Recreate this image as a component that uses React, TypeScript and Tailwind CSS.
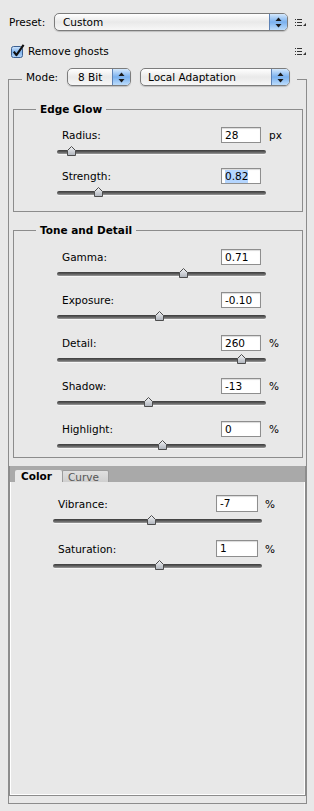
import type { ReactNode } from "react";

type Item = { label: string; value: string; unit?: string; pos: number; selected?: boolean };

const edgeGlow: Item[] = [
  { label: "Radius:", value: "28", unit: "px", pos: 14 },
  { label: "Strength:", value: "0.82", pos: 41, selected: true },
];

const toneDetail: Item[] = [
  { label: "Gamma:", value: "0.71", pos: 126 },
  { label: "Exposure:", value: "-0.10", pos: 102 },
  { label: "Detail:", value: "260", unit: "%", pos: 184 },
  { label: "Shadow:", value: "-13", unit: "%", pos: 91 },
  { label: "Highlight:", value: "0", unit: "%", pos: 105 },
];

const color: Item[] = [
  { label: "Vibrance:", value: "-7", unit: "%", pos: 98 },
  { label: "Saturation:", value: "1", unit: "%", pos: 106 },
];

function MenuIcon({ className }: { className?: string }) {
  return (
    <svg width="11" height="7" viewBox="0 0 11 7" className={className}>
      <rect x="0" y="0" width="1" height="1" fill="#333" />
      <rect x="2" y="0" width="5" height="1" fill="#333" />
      <rect x="0" y="3" width="1" height="1" fill="#333" />
      <rect x="2" y="3" width="5" height="1" fill="#333" />
      <rect x="0" y="6" width="1" height="1" fill="#333" />
      <rect x="2" y="6" width="5" height="1" fill="#333" />
      <polygon points="8,7 11,7 11,4" fill="#333" />
    </svg>
  );
}

function Checkbox() {
  return (
    <svg width="14" height="15" viewBox="0 0 14 15">
      <defs>
        <linearGradient id="cb" x1="0" y1="0" x2="0" y2="1">
          <stop offset="0" stopColor="#d2e6fb" />
          <stop offset="0.5" stopColor="#7fb3ee" />
          <stop offset="1" stopColor="#b5d7fa" />
        </linearGradient>
      </defs>
      <rect x="0.5" y="2.5" width="11" height="11" rx="2" fill="url(#cb)" stroke="#3b5f91" />
      <path d="M2.8 7.6 L5.4 11.2 L12.6 0.8" fill="none" stroke="#111" strokeWidth="2.1" strokeLinejoin="round" />
    </svg>
  );
}

function Popup({ width, pad, children }: { width: string; pad: string; children: ReactNode }) {
  return (
    <div
      className={`flex h-[18px] ${width} overflow-hidden rounded-[5px] border border-[#7c7c7c] bg-gradient-to-b from-white via-[#e9e9e9] to-[#f7f7f7] shadow-[0_1px_1px_rgba(0,0,0,0.18)]`}
    >
      <span className={`flex-1 ${pad} leading-[16px]`}>{children}</span>
      <span className="flex w-[18px] items-center justify-center border-l border-[#5d82b5] bg-gradient-to-b from-[#d4e8fc] via-[#79b0ee] to-[#bcdcfb]">
        <svg width="7" height="11" viewBox="0 0 7 11">
          <polygon points="3.5,0.5 6.5,4 0.5,4" fill="#1a1a1a" />
          <polygon points="0.5,7 6.5,7 3.5,10.5" fill="#1a1a1a" />
        </svg>
      </span>
    </div>
  );
}

function Slider({ pos }: { pos: number }) {
  return (
    <div className="relative h-[11px] w-[209px]">
      <div className="absolute left-0 right-0 top-[5px] h-[4px] rounded-full bg-gradient-to-b from-[#3c3c3c] via-[#5e5e5e] to-[#9c9c9c] shadow-[0_1px_0_rgba(255,255,255,0.6)]" />
      <svg width="9" height="10" viewBox="0 0 9 10" className="absolute top-[1px]" style={{ left: pos - 4 }}>
        <defs>
          <linearGradient id="th" x1="0" y1="0" x2="0" y2="1">
            <stop offset="0" stopColor="#f4f5f7" />
            <stop offset="1" stopColor="#aeb3bb" />
          </linearGradient>
        </defs>
        <polygon points="4.5,0.5 8.5,4.5 8.5,9.5 0.5,9.5 0.5,4.5" fill="url(#th)" stroke="#4d4d4d" />
      </svg>
    </div>
  );
}

function Control({ item, inColor }: { item: Item; inColor?: boolean }) {
  return (
    <div>
      <div className={inColor ? "flex h-[17px] items-center pl-[47px]" : "flex h-[16px] items-center pl-[48px]"}>
        <span className={inColor ? "w-[158px]" : "w-[159px]"}>{item.label}</span>
        <div
          className={
            inColor
              ? "flex h-[17px] w-[42px] items-center border border-[#8e8e8e] bg-white pl-[3px] shadow-[inset_0_1px_1px_rgba(0,0,0,0.15)]"
              : "flex h-[16px] w-[40px] items-center border border-[#8e8e8e] bg-white pl-[3px] shadow-[inset_0_1px_1px_rgba(0,0,0,0.15)]"
          }
        >
          <span className={item.selected ? "bg-[#b4d5fe] leading-[13px]" : "leading-[13px]"}>{item.value}</span>
        </div>
        {item.unit && <span className={inColor ? "ml-[7px]" : "ml-[8px]"}>{item.unit}</span>}
      </div>
      <div className={inColor ? "mt-[2px] ml-[42px]" : "mt-[2px] ml-[43px]"}>
        <Slider pos={item.pos} />
      </div>
    </div>
  );
}

export default function App() {
  return (
    <div className="min-h-[811px] w-[314px] bg-[#e8e8e8] pt-[13px] font-['DejaVu_Sans',sans-serif] text-[10.5px] leading-[14px] text-black">
      <div className="flex h-[18px] items-center pl-[9px]">
        <span className="w-[45px]">Preset:</span>
        <Popup width="w-[234px]" pad="pl-[8px]">
          Custom
        </Popup>
        <MenuIcon className="ml-[7px]" />
      </div>

      <div className="mt-[11px] flex h-[18px] items-center pl-[11px]">
        <Checkbox />
        <span className="ml-[3px]">Remove ghosts</span>
        <MenuIcon className="ml-auto mr-[8px]" />
      </div>

      <fieldset className="mt-[8px] ml-[8px] w-[299px] border border-[#8c8c8c] pb-[7px]">
        <legend className="ml-[13px] px-[4px]">
          <div className="flex h-[22px] items-start">
            <span className="flex h-[18px] w-[41px] items-center">Mode:</span>
            <Popup width="w-[64px]" pad="pl-[10px]">
              8 Bit
            </Popup>
            <div className="ml-[9px]">
              <Popup width="w-[150px]" pad="pl-[7px]">
                Local Adaptation
              </Popup>
            </div>
            <span className="w-[3px]" />
          </div>
        </legend>

        <fieldset className="mt-[12px] ml-[4px] w-[290px] border border-[#8c8c8c] pt-[11px] pb-[14px]">
          <legend className="ml-[22px] px-[4px] font-bold">Edge Glow</legend>
          <div className="flex flex-col gap-[12px]">
            {edgeGlow.map((it) => (
              <Control key={it.label} item={it} />
            ))}
          </div>
        </fieldset>

        <fieldset className="mt-[11px] ml-[4px] w-[290px] border border-[#8c8c8c] pt-[12px] pb-[7px]">
          <legend className="ml-[22px] px-[4px] font-bold">Tone and Detail</legend>
          <div className="flex flex-col gap-[14px]">
            {toneDetail.map((it) => (
              <Control key={it.label} item={it} />
            ))}
          </div>
        </fieldset>

        <div className="mt-[8px] border-x border-b border-[#8c8c8c]">
          <div className="flex h-[16px] items-end bg-[#a9a9a9] pl-[5px]">
            <div className="flex h-[12px] w-[47px] items-center rounded-t-[2px] bg-[#e8e8e8] pl-[6px] font-bold leading-[12px]">
              Color
            </div>
            <div className="flex h-[12px] w-[47px] items-center rounded-t-[2px] border border-b-0 border-[#9c9c9c] bg-gradient-to-b from-[#e0e0e0] to-[#cfcfcf] pl-[5px] leading-[12px] text-[#555]">
              Curve
            </div>
          </div>
          <div className="h-[313px] border-x border-b border-white pt-[13px]">
            <div className="flex flex-col gap-[15px]">
              {color.map((it) => (
                <Control key={it.label} item={it} inColor />
              ))}
            </div>
          </div>
        </div>
      </fieldset>
    </div>
  );
}
